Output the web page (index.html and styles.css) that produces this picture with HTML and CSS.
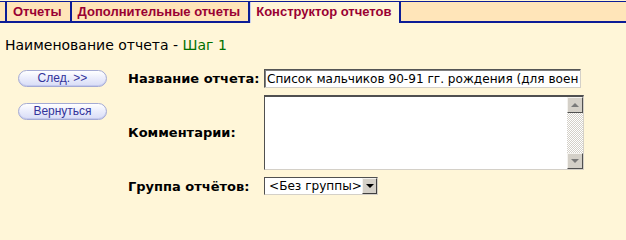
FILE: index.html
```html
<!DOCTYPE html>
<html lang="ru">
<head>
<meta charset="utf-8">
<link rel="stylesheet" href="styles.css">
</head>
<body>
<div class="tabs">
  <div class="tab-lead"></div>
  <div class="tab">Отчеты</div>
  <div class="tab">Дополнительные отчеты</div>
  <div class="tab active">Конструктор отчетов</div>
  <div class="tab-fill"></div>
</div>
<h1 class="title">Наименование отчета - <span class="step">Шаг 1</span></h1>
<div class="main">
  <div class="side">
    <button class="pill">След. &gt;&gt;</button>
    <button class="pill">Вернуться</button>
  </div>
  <div class="form">
    <label class="lbl">Название отчета:</label>
    <div class="field"><input class="text" type="text" value="Список мальчиков 90-91 гг. рождения (для военкомата)"></div>
    <label class="lbl">Комментарии:</label>
    <div class="field">
      <div class="memo">
        <textarea class="memo-area"></textarea>
        <div class="sbar">
          <div class="sbtn"><span class="arr up"></span></div>
          <div class="strack"></div>
          <div class="sbtn"><span class="arr down"></span></div>
        </div>
      </div>
    </div>
    <label class="lbl">Группа отчётов:</label>
    <div class="field">
      <div class="combo">
        <span class="combo-text">&lt;Без группы&gt;</span>
        <span class="combo-btn"><span class="arr down blk"></span></span>
      </div>
    </div>
  </div>
</div>
</body>
</html>
```

FILE: styles.css
```css
html, body {
  margin: 0;
  padding: 0;
  background: #fff6d8;
}
body {
  font-family: "DejaVu Sans", Verdana, sans-serif;
  color: #000;
  padding-top: 1px;
}
.tabs {
  display: flex;
  height: 21px;
  border-top: 1px solid #0c1c96;
}
.tab-lead, .tab, .tab-fill {
  background: #ffe5b9;
  border-bottom: 2px solid #0c1c96;
}
.tab-lead {
  width: 5px;
}
.tab {
  border-left: 2px solid #0c1c96;
  padding: 0 8px 0 6px;
  font-family: "Liberation Sans", Arial, sans-serif;
  font-weight: bold;
  font-size: 13px;
  line-height: 20px;
  color: #990033;
  white-space: nowrap;
}
.tab.active {
  background: #fff6d8;
  border-bottom: 0;
  border-right: 2px solid #0c1c96;
  box-shadow: inset 1px 0 0 #c8d0f0;
}
.tab-fill {
  flex: 1;
}
.title {
  margin: 14px 0 0 5px;
  font-size: 14px;
  font-weight: normal;
  line-height: 16px;
}
.step {
  color: #007000;
}
.main {
  display: flex;
  margin-top: 16px;
}
.side {
  width: 128px;
  display: flex;
  flex-direction: column;
  align-items: flex-start;
  padding: 1px 0 0 18px;
  box-sizing: border-box;
  gap: 16px;
}
.pill {
  width: 89px;
  height: 17px;
  margin: 0;
  padding: 0;
  border: 1px solid #a4aad4;
  border-radius: 9px;
  background: linear-gradient(#ffffff, #eceefc 45%, #d8dcf6);
  box-shadow: inset 0 -1px 0 #c4c9ee;
  font-family: "Liberation Sans", Arial, sans-serif;
  font-size: 12px;
  color: #33339a;
  line-height: 15px;
}
.form {
  display: grid;
  grid-template-columns: 136px auto;
  row-gap: 7px;
  align-items: center;
}
.lbl {
  font-weight: bold;
  font-size: 13px;
}
.field {
  display: flex;
}
.text {
  width: 317px;
  height: 19px;
  box-sizing: border-box;
  margin: 0;
  padding: 0 2px;
  border-style: solid;
  border-width: 1px;
  border-color: #555 #d4d0c8 #d4d0c8 #555;
  box-shadow: inset 1px 1px 0 #808080;
  background: #fff;
  font-family: "DejaVu Sans", Tahoma, sans-serif;
  font-size: 12.1px;
  color: #000;
  outline: none;
}
.memo {
  display: flex;
  width: 320px;
  height: 75px;
  box-sizing: border-box;
  border-style: solid;
  border-width: 2px 1px 1px 1px;
  border-color: #505050 #d4d0c8 #d4d0c8 #505050;
  background: #fff;
}
.memo-area {
  flex: 1;
  border: 0;
  margin: 0;
  padding: 0;
  resize: none;
  outline: none;
  background: #fff;
}
.sbar {
  width: 16px;
  display: flex;
  flex-direction: column;
}
.sbtn {
  height: 16px;
  box-sizing: border-box;
  background: #d4d0c8;
  border-style: solid;
  border-width: 1px;
  border-color: #f4f2ee #505050 #505050 #f4f2ee;
  display: flex;
  align-items: center;
  justify-content: center;
}
.strack {
  flex: 1;
  background: repeating-conic-gradient(#d4d0c8 0 25%, #ffffff 0 50%) 0 0 / 2px 2px;
}
.arr {
  width: 0;
  height: 0;
  border-left: 4px solid transparent;
  border-right: 4px solid transparent;
}
.arr.up {
  border-bottom: 4px solid #7a7a7a;
}
.arr.down {
  border-top: 4px solid #7a7a7a;
}
.arr.blk {
  border-top-color: #000;
}
.combo {
  display: flex;
  align-items: center;
  width: 114px;
  height: 18px;
  box-sizing: border-box;
  border-style: solid;
  border-width: 1px;
  border-color: #505050 #d4d0c8 #d4d0c8 #505050;
  background: #fff;
}
.combo-text {
  flex: 1;
  padding-left: 4px;
  font-family: "DejaVu Sans", Tahoma, sans-serif;
  font-size: 12.1px;
  line-height: 16px;
  white-space: nowrap;
}
.combo-btn {
  width: 15px;
  height: 16px;
  box-sizing: border-box;
  background: #d4d0c8;
  border-style: solid;
  border-width: 1px;
  border-color: #f4f2ee #404040 #404040 #f4f2ee;
  display: flex;
  align-items: center;
  justify-content: center;
}
```
